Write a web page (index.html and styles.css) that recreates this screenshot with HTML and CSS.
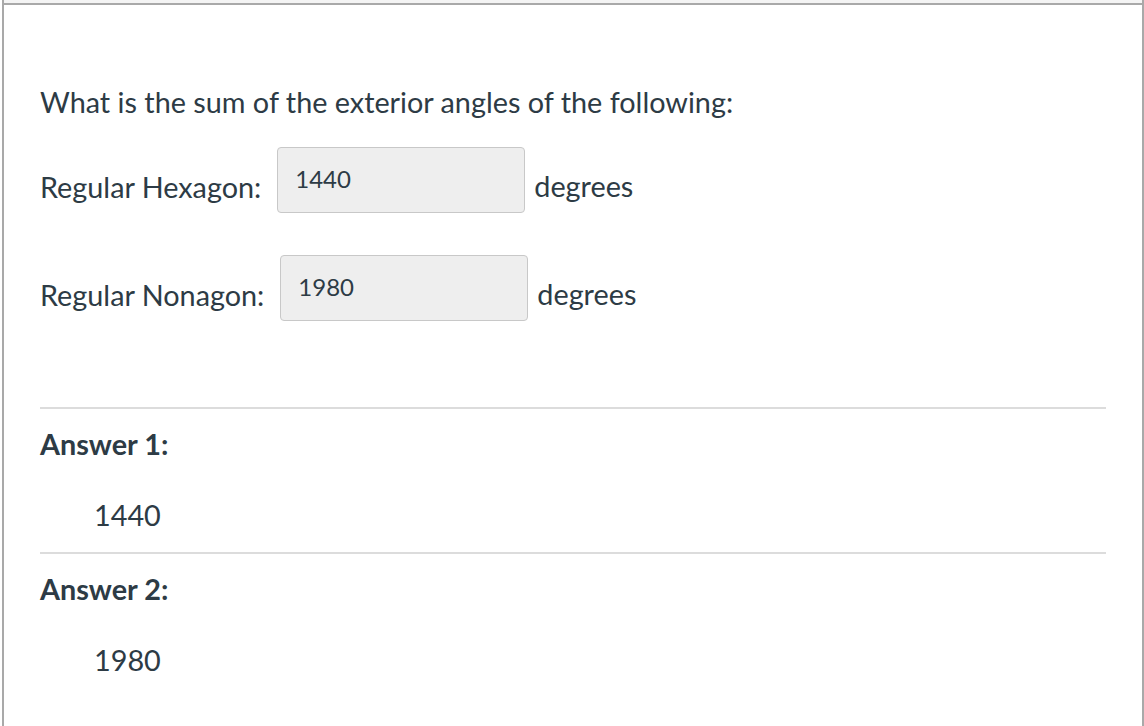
FILE: index.html
```html
<!DOCTYPE html>
<html lang="en">
<head>
<meta charset="utf-8">
<title>Question</title>
<link rel="stylesheet" href="styles.css">
</head>
<body>
<div class="frame">
  <div class="top-strip"></div>
  <div class="content">
    <p class="question">What is the sum of the exterior angles of the following:</p>
    <div class="row row-first">
      <span class="label">Regular Hexagon:</span>
      <div class="field"><span class="field-text">1440</span></div>
      <span class="unit">degrees</span>
    </div>
    <div class="row row-second">
      <span class="label">Regular Nonagon:</span>
      <div class="field"><span class="field-text">1980</span></div>
      <span class="unit">degrees</span>
    </div>
    <div class="answer answer-first">
      <div class="answer-title">Answer 1:</div>
      <div class="answer-value">1440</div>
    </div>
    <div class="answer">
      <div class="answer-title">Answer 2:</div>
      <div class="answer-value">1980</div>
    </div>
  </div>
</div>
</body>
</html>
```
FILE: styles.css
```css
html, body {
  margin: 0;
  padding: 0;
  background: #ffffff;
}
body {
  font-family: Lato, "Open Sans", sans-serif;
  color: #2d3b45;
  font-size: 28.8px;
  line-height: 43.2px;
}
.frame {
  margin-left: 2px;
  width: 1138px;
  height: 726px;
  border-left: 2px solid #a9a9a9;
  border-right: 2px solid #a9a9a9;
  box-sizing: content-box;
  overflow: hidden;
}
.top-strip {
  height: 3px;
  background: #f4f4f4;
  border-bottom: 2px solid #a9a9a9;
}
.content {
  padding: 76px 36px 0 36px;
}
.question {
  margin: 0 0 23px 0;
}
.row {
  display: flex;
  align-items: flex-end;
}
.row-second {
  margin-top: 42px;
}
.label {
  margin-bottom: 4px;
}
.field {
  width: 248px;
  height: 66px;
  box-sizing: border-box;
  margin-left: 16px;
  border: 1px solid #c8c8c8;
  border-radius: 4px;
  background: #eeeeee;
  padding: 16px 0 0 17px;
  font-size: 24px;
  line-height: 30px;
}
.unit {
  margin-left: 9px;
  margin-bottom: 5px;
}
.answer {
  border-top: 2px solid #dcdcdc;
  padding-top: 14px;
}
.answer-first {
  margin-top: 86px;
}
.answer-title {
  font-weight: 700;
}
.answer-value {
  margin-top: 28px;
  padding-left: 54px;
  padding-bottom: 14px;
}
```
